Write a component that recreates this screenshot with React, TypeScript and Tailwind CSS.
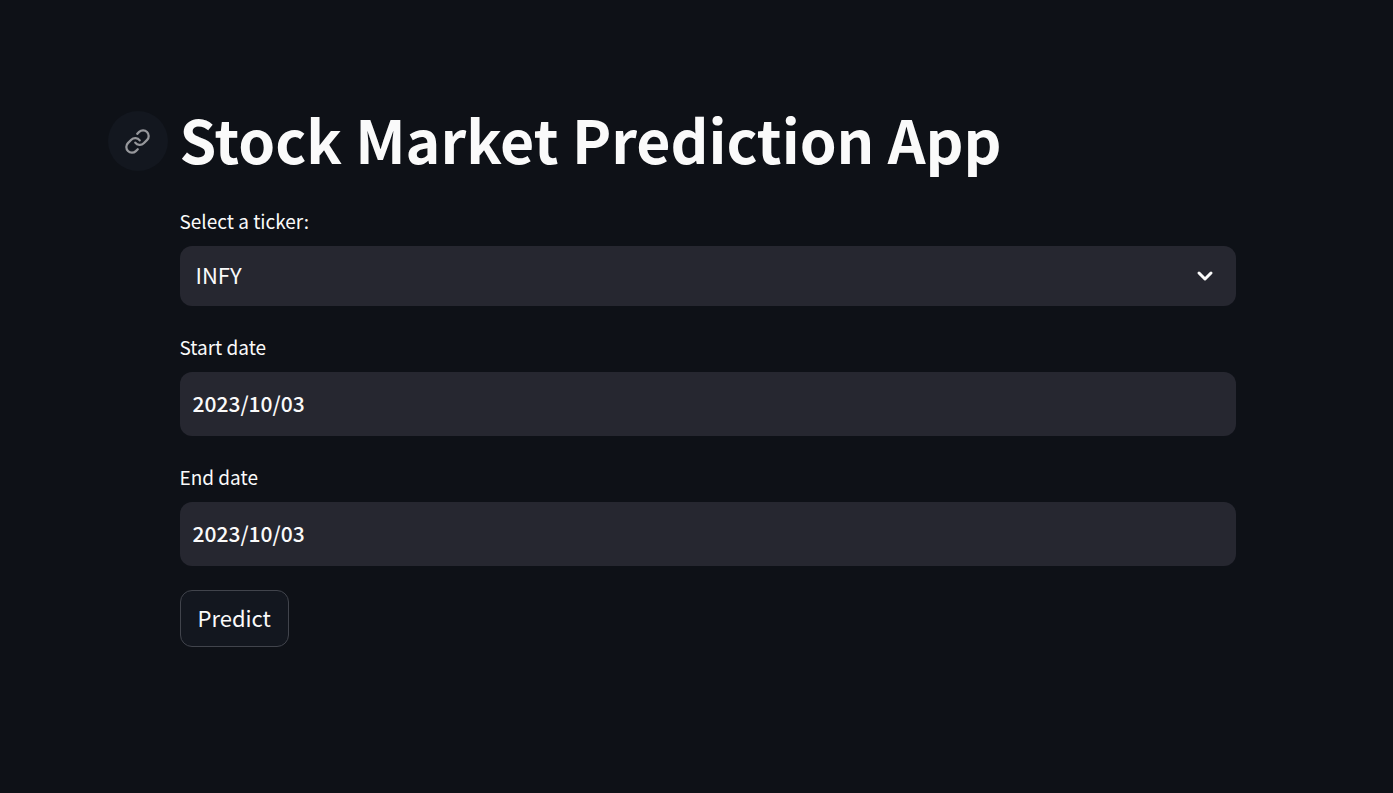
import { useState } from "react";

const tickers = ["INFY", "TCS", "RELIANCE", "HDFCBANK"];

function LinkIcon() {
  return (
    <svg
      className="size-[27px]"
      viewBox="0 0 24 24"
      fill="none"
      stroke="currentColor"
      strokeWidth="2"
      strokeLinecap="round"
      strokeLinejoin="round"
      aria-hidden="true"
    >
      <path d="M10 13a5 5 0 0 0 7.54.54l3-3a5 5 0 0 0-7.07-7.07l-1.72 1.71" />
      <path d="M14 11a5 5 0 0 0-7.54-.54l-3 3a5 5 0 0 0 7.07 7.07l1.71-1.71" />
    </svg>
  );
}

function ChevronIcon() {
  return (
    <svg
      className="pointer-events-none absolute inset-y-0 right-[19px] my-auto size-6"
      viewBox="0 0 24 24"
      fill="none"
      stroke="currentColor"
      strokeWidth="3"
      strokeLinecap="round"
      strokeLinejoin="round"
      aria-hidden="true"
    >
      <path d="M6 9l6 6 6-6" />
    </svg>
  );
}

type DateFieldProps = {
  id: string;
  label: string;
  value: string;
  onChange: (value: string) => void;
};

function DateField({ id, label, value, onChange }: DateFieldProps) {
  return (
    <div className="flex flex-col gap-2">
      <label htmlFor={id} className="text-[19px] leading-[34px]">
        {label}
      </label>
      <input
        id={id}
        type="text"
        value={value}
        onChange={(e) => onChange(e.target.value)}
        className="h-16 w-full rounded-xl bg-[#262730] px-[13px] pb-0.5 text-[21px] font-medium outline-none"
      />
    </div>
  );
}

export default function App() {
  const [ticker, setTicker] = useState("INFY");
  const [start, setStart] = useState("2023/10/03");
  const [end, setEnd] = useState("2023/10/03");

  return (
    <main className="min-h-screen bg-[#0e1117] pt-24 pr-4 pb-24 pl-[38px] font-['Noto_Sans_CJK_SC',sans-serif] text-[#fafafa]">
      <div className="mx-auto max-w-[1056px]">
        <header className="-ml-[72px] flex items-center gap-3">
          <a
            href="#stock-market-prediction-app"
            aria-label="Link to this heading"
            className="flex size-[60px] shrink-0 items-center justify-center rounded-full bg-[#13171f] text-[#96979b]"
          >
            <LinkIcon />
          </a>
          <h1 id="stock-market-prediction-app" className="pb-1 text-[59px] leading-[86px] font-bold">
            Stock Market Prediction App
          </h1>
        </header>

        <form className="mt-[18px] flex flex-col gap-6" onSubmit={(e) => e.preventDefault()}>
          <div className="flex flex-col gap-2">
            <label htmlFor="ticker" className="text-[19px] leading-[34px]">
              Select a ticker:
            </label>
            <div className="relative">
              <select
                id="ticker"
                value={ticker}
                onChange={(e) => setTicker(e.target.value)}
                className="h-[60px] w-full appearance-none rounded-xl bg-[#262730] px-4 pb-1 text-[22px] outline-none"
              >
                {tickers.map((name) => (
                  <option key={name}>{name}</option>
                ))}
              </select>
              <ChevronIcon />
            </div>
          </div>
          <DateField id="start" label="Start date" value={start} onChange={setStart} />
          <DateField id="end" label="End date" value={end} onChange={setEnd} />
          <button
            type="submit"
            className="h-[57px] self-start rounded-xl border border-[#41444c] bg-[#13171f] px-[17px] pb-0.5 text-[22px]"
          >
            Predict
          </button>
        </form>
      </div>
    </main>
  );
}
